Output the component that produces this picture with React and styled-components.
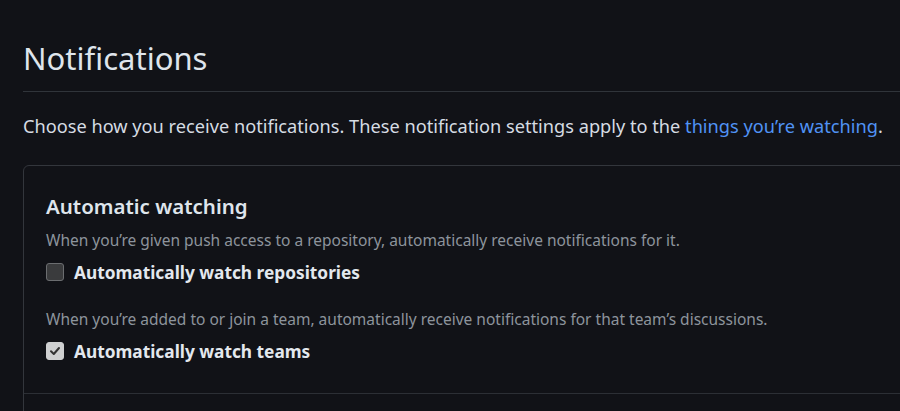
import React from "react";
import styled, { createGlobalStyle } from "styled-components";

const Global = createGlobalStyle`
  html, body {
    margin: 0;
    padding: 0;
    background: #111217;
    overflow: hidden;
  }
  body {
    font-family: "Noto Sans", "Open Sans", sans-serif;
    color: #d6dce3;
  }
`;

const Page = styled.div`
  padding: 35px 0 0 23px;
  width: 920px;
`;

const Subhead = styled.div`
  border-bottom: 1px solid #30343a;
  padding-bottom: 10px;
`;

const Title = styled.h1`
  margin: 0;
  font-size: 31px;
  font-weight: 400;
  line-height: 46px;
  color: #dfe5ec;
`;

const Lead = styled.p`
  margin: 21px 0 26px;
  font-size: 18.2px;
  line-height: 26px;
  color: #d6dce3;
`;

const Link = styled.a`
  color: #5093f5;
  text-decoration: none;
`;

const Box = styled.section`
  border: 1px solid #33363c;
  border-radius: 6px;
`;

const BoxBody = styled.div`
  padding: 25px 22px 28px;
  border-bottom: 1px solid #2c2f35;
`;

const BoxTitle = styled.h2`
  margin: 0 0 8px;
  font-size: 20.5px;
  font-weight: 600;
  line-height: 30px;
  color: #dfe5ec;
`;

const Note = styled.p`
  margin: ${(p) => (p.$spaced ? "22px" : "0")} 0 7px;
  font-size: 15.5px;
  line-height: 22px;
  color: #8d949c;
`;

const CheckRow = styled.label`
  display: flex;
  align-items: center;
  gap: 10px;
  height: 28px;
`;

const CheckBox = styled.span`
  box-sizing: border-box;
  width: 18px;
  height: 18px;
  border-radius: 3px;
  display: flex;
  align-items: center;
  justify-content: center;
  background: ${(p) => (p.$checked ? "#cfd0d1" : "#3a3b3d")};
  border: 1px solid ${(p) => (p.$checked ? "#cfd0d1" : "#6b6d70")};
`;

const Label = styled.span`
  font-size: 17.3px;
  font-weight: 700;
  color: #e3e8ee;
`;

function Check({ checked }) {
  return (
    <CheckBox $checked={checked}>
      {checked && (
        <svg width="12" height="12" viewBox="0 0 12 12">
          <path d="M2 6.3 L4.8 9 L10 3" fill="none" stroke="#333" strokeWidth="2" strokeLinecap="round" strokeLinejoin="round" />
        </svg>
      )}
    </CheckBox>
  );
}

export default function App() {
  return (
    <>
      <Global />
      <Page>
        <Subhead>
          <Title>Notifications</Title>
        </Subhead>
        <Lead>
          Choose how you receive notifications. These notification settings apply to the{" "}
          <Link href="#">things you’re watching</Link>.
        </Lead>
        <Box>
          <BoxBody>
            <BoxTitle>Automatic watching</BoxTitle>
            <Note>When you’re given push access to a repository, automatically receive notifications for it.</Note>
            <CheckRow>
              <Check checked={false} />
              <Label>Automatically watch repositories</Label>
            </CheckRow>
            <Note $spaced>When you’re added to or join a team, automatically receive notifications for that team’s discussions.</Note>
            <CheckRow>
              <Check checked />
              <Label>Automatically watch teams</Label>
            </CheckRow>
          </BoxBody>
          <BoxBody />
        </Box>
      </Page>
    </>
  );
}
